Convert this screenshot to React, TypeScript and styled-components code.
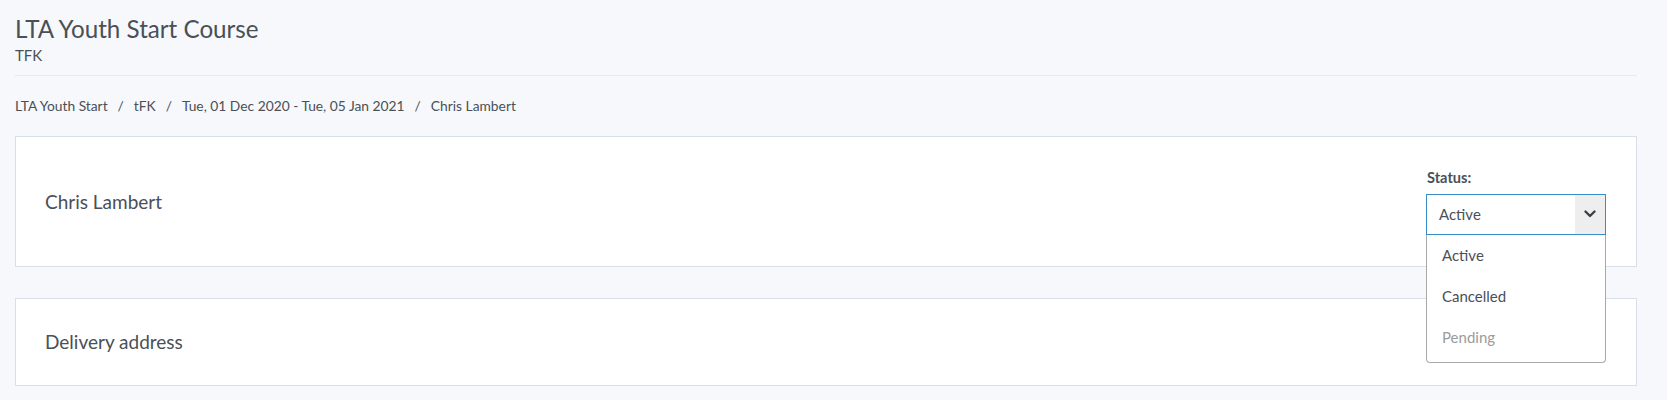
import { Fragment } from "react";
import styled, { createGlobalStyle } from "styled-components";

const GlobalStyle = createGlobalStyle`
  html, body {
    margin: 0;
    padding: 0;
    background: #f6f8fb;
  }
  body {
    font-family: Lato, "Noto Sans", sans-serif;
    color: #495057;
  }
  * {
    box-sizing: border-box;
  }
`;

const Page = styled.div`
  padding: 14px 30px 0 15px;
  display: flex;
  flex-direction: column;
`;

const Title = styled.h1`
  margin: 0;
  font-size: 24.2px;
  font-weight: 400;
  line-height: 29px;
  color: #495057;
`;

const Subtitle = styled.div`
  margin-top: 3px;
  font-size: 15px;
  line-height: 18px;
`;

const Divider = styled.hr`
  margin: 11px 0 0;
  border: 0;
  border-top: 1px solid #e6e9ee;
`;

const Breadcrumb = styled.nav`
  margin-top: 22px;
  display: flex;
  gap: 10px;
  font-size: 13.8px;
  line-height: 16px;
`;

const Crumb = styled.span``;

const Separator = styled.span``;

const Card = styled.section<{ $height: number; $gap: number }>`
  position: relative;
  margin-top: ${({ $gap }) => $gap}px;
  height: ${({ $height }) => $height}px;
  background: #fff;
  border: 1px solid #d7e0e8;
  padding: 0 30px 0 29px;
  display: flex;
  align-items: center;
  justify-content: space-between;
`;

const CardTitle = styled.div<{ $shift?: number }>`
  font-size: 19px;
  line-height: 23px;
  margin-top: ${({ $shift = 0 }) => -$shift * 2}px;
`;

const StatusField = styled.div`
  position: relative;
  display: flex;
  flex-direction: column;
  gap: 8px;
  width: 180px;
`;

const Label = styled.label`
  font-size: 14.6px;
  font-weight: 700;
  line-height: 17px;
  padding-left: 1px;
`;

const SelectBox = styled.div`
  height: 41px;
  border: 1px solid #3a8dc8;
  background: #fff;
  display: flex;
  align-items: stretch;
`;

const SelectValue = styled.div`
  flex: 1;
  display: flex;
  align-items: center;
  padding-left: 12px;
  font-size: 15px;
`;

const SelectArrow = styled.div`
  width: 30px;
  background: #eeeeee;
  display: flex;
  align-items: center;
  justify-content: center;
`;

const Menu = styled.ul`
  position: absolute;
  top: 100%;
  left: 0;
  right: 0;
  margin: 0;
  padding: 0 0 4px;
  list-style: none;
  background: #fff;
  border: 1px solid #a9a9a9;
  border-top: 0;
  border-radius: 0 0 4px 4px;
  z-index: 2;
`;

const MenuOption = styled.li<{ $disabled?: boolean }>`
  height: 41px;
  display: flex;
  align-items: center;
  padding-left: 15px;
  font-size: 15px;
  color: ${({ $disabled }) => ($disabled ? "#9b9b9b" : "#495057")};
`;

const Chevron = () => (
  <svg width="12" height="8" viewBox="0 0 12 8">
    <polyline
      points="1.5,1.5 6,6 10.5,1.5"
      fill="none"
      stroke="#3d4247"
      strokeWidth="2.4"
      strokeLinecap="round"
      strokeLinejoin="round"
    />
  </svg>
);

const crumbs = [
  "LTA Youth Start",
  "tFK",
  "Tue, 01 Dec 2020 - Tue, 05 Jan 2021",
  "Chris Lambert",
];

const options = [
  { label: "Active" },
  { label: "Cancelled" },
  { label: "Pending", disabled: true },
];

export default function App() {
  return (
    <>
      <GlobalStyle />
      <Page>
        <Title>LTA Youth Start Course</Title>
        <Subtitle>TFK</Subtitle>
        <Divider />
        <Breadcrumb>
          {crumbs.map((c, i) => (
            <Fragment key={c}>
              {i > 0 && <Separator>/</Separator>}
              <Crumb>{c}</Crumb>
            </Fragment>
          ))}
        </Breadcrumb>

        <Card $height={131} $gap={22}>
          <CardTitle>Chris Lambert</CardTitle>
          <StatusField>
            <Label>Status:</Label>
            <SelectBox>
              <SelectValue>Active</SelectValue>
              <SelectArrow>
                <Chevron />
              </SelectArrow>
            </SelectBox>
            <Menu>
              {options.map((o) => (
                <MenuOption key={o.label} $disabled={o.disabled}>
                  {o.label}
                </MenuOption>
              ))}
            </Menu>
          </StatusField>
        </Card>

        <Card $height={88} $gap={31}>
          <CardTitle $shift={1}>Delivery address</CardTitle>
        </Card>
      </Page>
    </>
  );
}
